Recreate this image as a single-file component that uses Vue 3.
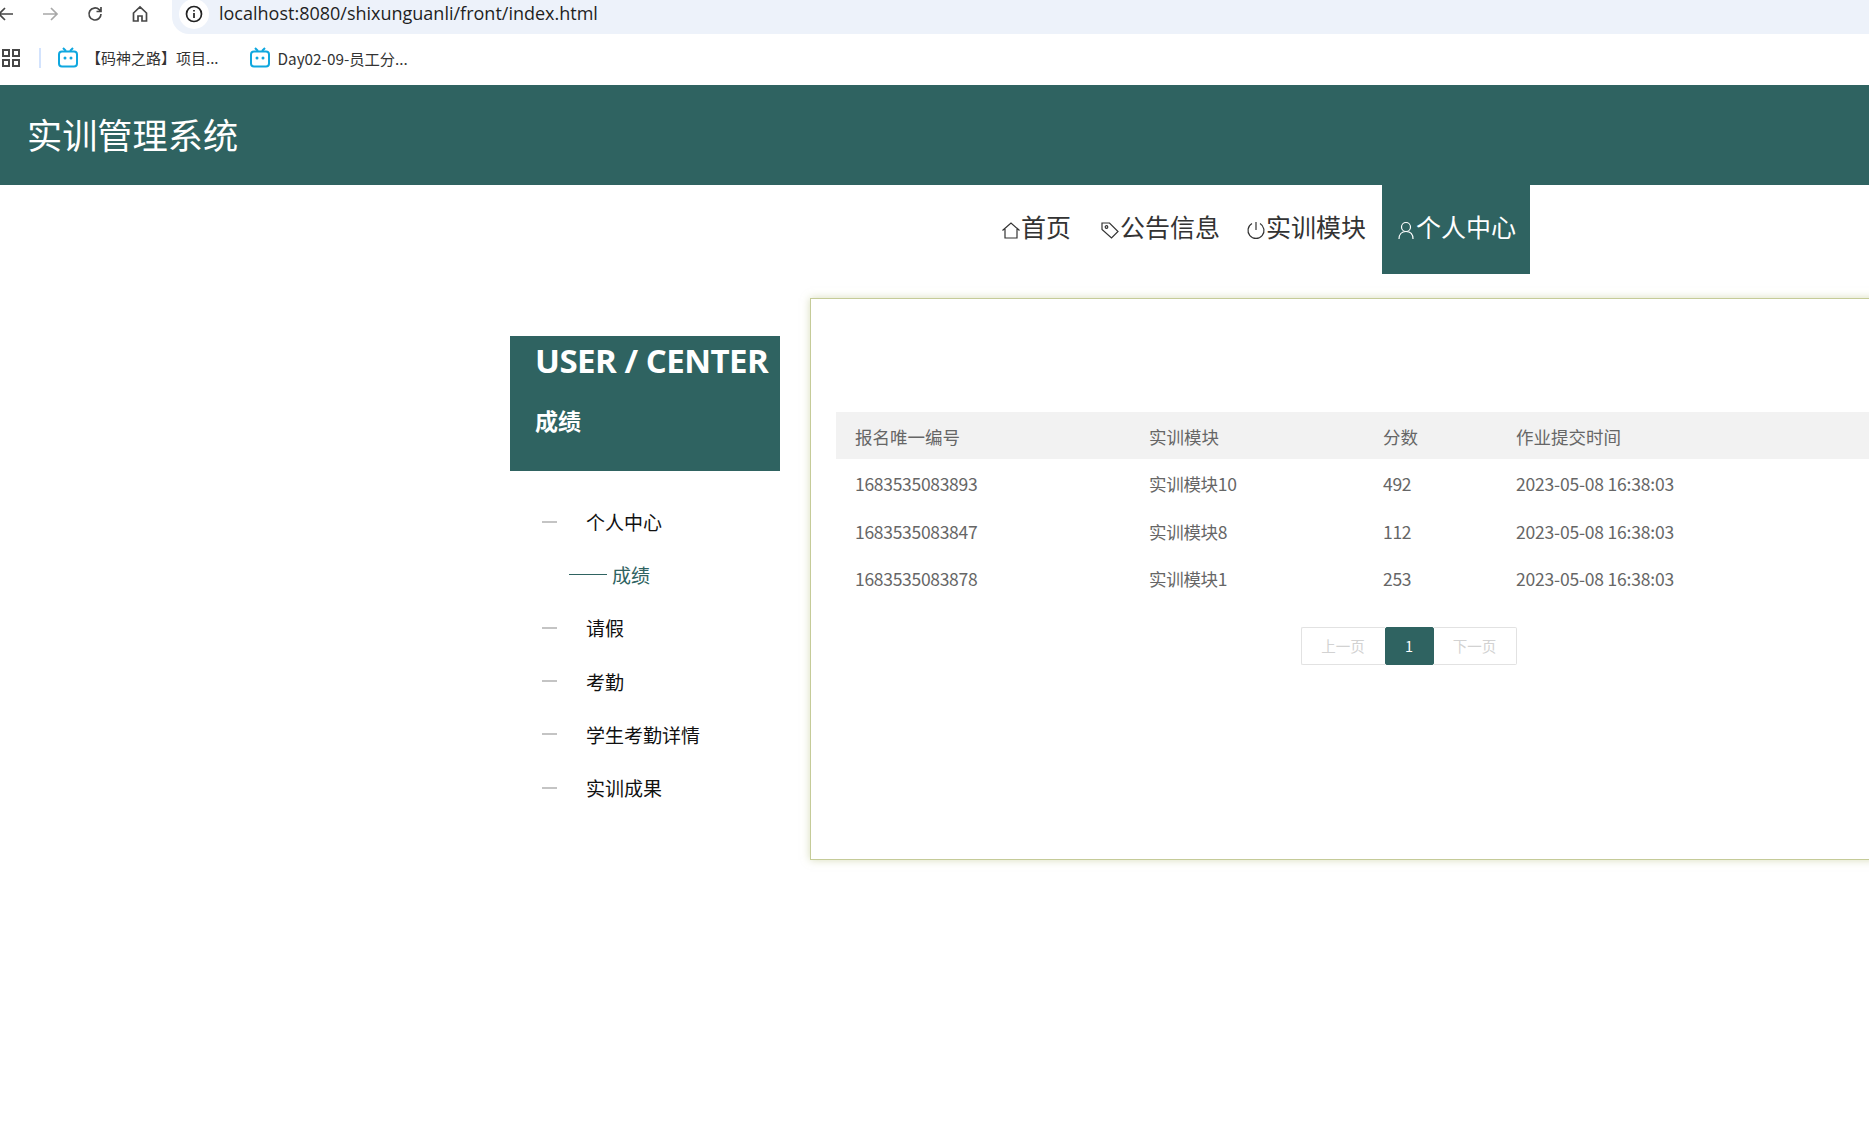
<script setup>
const navItems = [
  { label: '首页', icon: 'home' },
  { label: '公告信息', icon: 'tag' },
  { label: '实训模块', icon: 'power' },
  { label: '个人中心', icon: 'user', active: true }
]

const menu = [
  { label: '个人中心' },
  { label: '成绩', sub: true },
  { label: '请假' },
  { label: '考勤' },
  { label: '学生考勤详情' },
  { label: '实训成果' }
]

const rows = [
  { id: '1683535083893', module: '实训模块10', score: 492, time: '2023-05-08 16:38:03' },
  { id: '1683535083847', module: '实训模块8', score: 112, time: '2023-05-08 16:38:03' },
  { id: '1683535083878', module: '实训模块1', score: 253, time: '2023-05-08 16:38:03' }
]
</script>

<template>
  <div class="page">
    <!-- browser chrome -->
    <div class="toolbar">
      <svg class="tool-icon back" viewBox="0 0 20 20"><path d="M17 10H3M9 4l-6 6 6 6" /></svg>
      <svg class="tool-icon forward" viewBox="0 0 20 20"><path d="M3 10h14M11 4l6 6-6 6" /></svg>
      <svg class="tool-icon reload" viewBox="0 0 20 20"><path d="M16 10a6 6 0 1 1-1.800-4.300L16 7.500M16 3v4.500h-4.500" /></svg>
      <svg class="tool-icon home" viewBox="0 0 20 20"><path d="M3.500 9 10 3l6.500 6v8h-4.500v-5h-4v5H3.500z" /></svg>
      <div class="address">
        <span class="info-badge">
          <svg viewBox="0 0 20 20"><circle cx="10" cy="10" r="7.500" /><path d="M10 9v5M10 6v1.500" /></svg>
        </span>
        <span class="url">localhost:8080/shixunguanli/front/index.html</span>
      </div>
    </div>
    <div class="bookmarks">
      <svg class="apps" viewBox="0 0 18 18">
        <rect x="1" y="1" width="6" height="6" />
        <rect x="11" y="1" width="6" height="6" />
        <rect x="1" y="11" width="6" height="6" />
        <rect x="11" y="11" width="6" height="6" />
      </svg>
      <span class="divider"></span>
      <span class="bookmark first">
        <svg viewBox="0 0 22 22"><path d="M6 1l3 3M16 1l-3 3" /><rect x="2" y="4.500" width="18" height="15" rx="3" /><circle cx="8" cy="11" r="1.500" class="dot" /><circle cx="14" cy="11" r="1.500" class="dot" /></svg>
        【码神之路】项目...
      </span>
      <span class="bookmark second">
        <svg viewBox="0 0 22 22"><path d="M6 1l3 3M16 1l-3 3" /><rect x="2" y="4.500" width="18" height="15" rx="3" /><circle cx="8" cy="11" r="1.500" class="dot" /><circle cx="14" cy="11" r="1.500" class="dot" /></svg>
        Day02-09-员工分...
      </span>
    </div>

    <header class="site-header"><span class="site-name">实训管理系统</span></header>

    <nav class="site-nav">
      <a v-for="item in navItems" :key="item.label" class="nav-item" :class="['nav-' + item.icon, { active: item.active }]">
        <svg class="nav-icon" viewBox="0 0 20 20">
          <path v-if="item.icon === 'home'" d="M1.500 10.500 10 3l8.500 7.500M4 9v9h12V9" />
          <template v-else-if="item.icon === 'tag'">
            <path d="M2 3h7.500l8.500 8.500-6.500 6.500L2 9.500z" />
            <circle cx="6.500" cy="7" r="1.300" />
          </template>
          <template v-else-if="item.icon === 'power'">
            <path d="M6 3.500a8 8 0 1 0 8 0M10 2v8" />
          </template>
          <template v-else>
            <circle cx="10" cy="7" r="4.500" />
            <path d="M3 19c0-4.500 2.500-7.500 7-7.500s7 3 7 7.500" />
          </template>
        </svg>
        <span class="nav-label">{{ item.label }}</span>
      </a>
    </nav>

    <main class="layout">
      <aside class="sidebar">
        <div class="side-title">
          <div class="side-en">USER / CENTER</div>
          <div class="side-cn">成绩</div>
        </div>
        <ul class="side-menu">
          <li v-for="m in menu" :key="m.label" class="side-item" :class="{ sub: m.sub }">
            <span class="dash"></span>{{ m.label }}
          </li>
        </ul>
      </aside>

      <section class="card">
        <table class="score-table">
          <colgroup>
            <col class="c1" /><col class="c2" /><col class="c3" /><col />
          </colgroup>
          <thead>
            <tr>
              <th>报名唯一编号</th>
              <th>实训模块</th>
              <th>分数</th>
              <th>作业提交时间</th>
            </tr>
          </thead>
          <tbody>
            <tr v-for="r in rows" :key="r.id">
              <td>{{ r.id }}</td>
              <td>{{ r.module }}</td>
              <td>{{ r.score }}</td>
              <td class="time">{{ r.time }}</td>
            </tr>
          </tbody>
        </table>
        <div class="pager">
          <button class="pg prev" type="button">上一页</button>
          <button class="pg current" type="button">1</button>
          <button class="pg next" type="button">下一页</button>
        </div>
      </section>
    </main>
  </div>
</template>

<style>
html, body { margin: 0; background: #fff; overflow: hidden; }
</style>

<style scoped>
.page {
  width: 1869px;
  height: 1143px;
  overflow: hidden;
  background: #fff;
  font-family: "Noto Sans CJK SC", "Noto Sans", sans-serif;
}

/* browser chrome */
.toolbar {
  height: 34px;
  display: flex;
  align-items: center;
}
.tool-icon {
  width: 20px;
  height: 20px;
  fill: none;
  stroke: #474747;
  stroke-width: 1.700;
  flex: none;
  margin-top: -6px;
}
.back { margin-left: -4px; }
.forward { margin-left: 24px; stroke: #a8a8a8; }
.reload { margin-left: 25px; }
.home { margin-left: 25px; }
.address {
  margin-left: 22px;
  flex: 1;
  height: 34px;
  background: #edf2fa;
  border-radius: 0 0 0 17px;
  display: flex;
  align-items: center;
}
.info-badge {
  width: 30px;
  height: 30px;
  margin-left: 7px;
  margin-top: -6px;
  border-radius: 50%;
  background: #fff;
  display: flex;
  align-items: center;
  justify-content: center;
}
.info-badge svg {
  width: 20px;
  height: 20px;
  fill: none;
  stroke: #222;
  stroke-width: 1.700;
}
.url {
  margin-left: 10px;
  margin-top: -8px;
  font-family: "Open Sans", sans-serif;
  font-size: 18px;
  color: #1f1f1f;
}
.bookmarks {
  height: 47px;
  padding-bottom: 4px;
  display: flex;
  align-items: center;
  font-size: 15px;
  color: #333;
}
.apps {
  width: 18px;
  height: 18px;
  margin-left: 2px;
  fill: none;
  stroke: #474747;
  stroke-width: 2;
}
.divider {
  width: 2px;
  height: 20px;
  background: #d3e3fd;
  margin-left: 19px;
}
.bookmark {
  display: flex;
  align-items: center;
  gap: 7px;
  white-space: nowrap;
}
.bookmark svg {
  width: 22px;
  height: 22px;
  fill: none;
  stroke: #0fa7df;
  stroke-width: 2;
}
.bookmark .dot { fill: #0fa7df; stroke: none; }
.first { margin-left: 16px; }
.second { margin-left: 30px; font-size: 15.300px; }

/* site */
.site-header {
  height: 100px;
  background: #2f6361;
  color: #fff;
  font-size: 35.200px;
  display: flex;
  align-items: center;
  padding-left: 27px;
}
.site-name {
  margin-bottom: 4px;
}
.site-nav {
  height: 89px;
  display: flex;
  padding-left: 987px;
}
.nav-item {
  display: flex;
  align-items: center;
  padding: 0 14px;
  font-size: 25px;
  color: #333;
  white-space: nowrap;
}
.nav-home { padding-right: 15px; }
.nav-tag { padding-right: 12px; }
.nav-power { padding-right: 16px; }
.nav-label {
  margin-bottom: 7px;
}
.nav-item.active {
  background: #2f6361;
  color: #fff;
}
.nav-icon {
  width: 20px;
  height: 20px;
  fill: none;
  stroke: currentColor;
  stroke-width: 1.200;
  flex: none;
}

.layout {
  display: flex;
  align-items: flex-start;
  padding-left: 510px;
  padding-top: 24px;
}
.sidebar {
  width: 270px;
  flex: none;
  margin-top: 38px;
}
.side-title {
  height: 135px;
  box-sizing: border-box;
  background: #2f6361;
  color: #fff;
  padding-left: 25px;
  font-weight: 700;
}
.side-en {
  font-family: "Open Sans", sans-serif;
  font-size: 33px;
  line-height: 50px;
  letter-spacing: -0.5px;
  white-space: nowrap;
}
.side-cn {
  font-size: 23px;
  line-height: 34px;
  margin-top: 17px;
}
.side-menu {
  list-style: none;
  margin: 24px 0 0;
  padding: 0;
}
.side-item {
  height: 53.200px;
  display: flex;
  align-items: center;
  padding-left: 32px;
  font-size: 19px;
  color: #111;
}
.dash {
  width: 15px;
  height: 2px;
  background: #c4c4c4;
  margin-right: 29px;
}
.side-item.sub {
  padding-left: 59px;
  color: #2f6361;
}
.sub .dash {
  width: 38px;
  height: 1px;
  background: #2f6361;
  margin-right: 5px;
}

.card {
  width: 1196px;
  height: 562px;
  box-sizing: border-box;
  flex: none;
  margin-left: 30px;
  padding: 113px 24px 0 25px;
  border: 1px solid #c5cb98;
  box-shadow: 0 0 8px rgba(190, 198, 140, 0.6);
}
.score-table {
  width: 100%;
  table-layout: fixed;
  border-collapse: collapse;
  font-size: 17.500px;
  color: #666;
}
.c1 { width: 294px; }
.c2 { width: 234px; }
.c3 { width: 133px; }
.score-table th {
  height: 47px;
  padding: 2px 0 0 19px;
  box-sizing: border-box;
  background: #f2f2f2;
  font-weight: 400;
  text-align: left;
}
.score-table td {
  height: 47.500px;
  padding: 2px 0 0 19px;
  box-sizing: border-box;
  letter-spacing: -0.3px;
}
.score-table td.time {
  letter-spacing: -0.2px;
}
.pager {
  display: flex;
  justify-content: center;
  margin-top: 25px;
}
.pg {
  height: 38px;
  box-sizing: border-box;
  border: 1px solid #e2e2e2;
  background: #fff;
  color: #d2d2d2;
  font: inherit;
  font-size: 14.500px;
  padding: 0;
}
.prev { width: 84px; border-right: 0; border-radius: 2px 0 0 2px; }
.next { width: 83px; border-left: 0; border-radius: 0 2px 2px 0; }
.current {
  width: 49px;
  background: #2f6361;
  border-color: #2f6361;
  color: #fff;
  border-radius: 2px;
}
</style>
